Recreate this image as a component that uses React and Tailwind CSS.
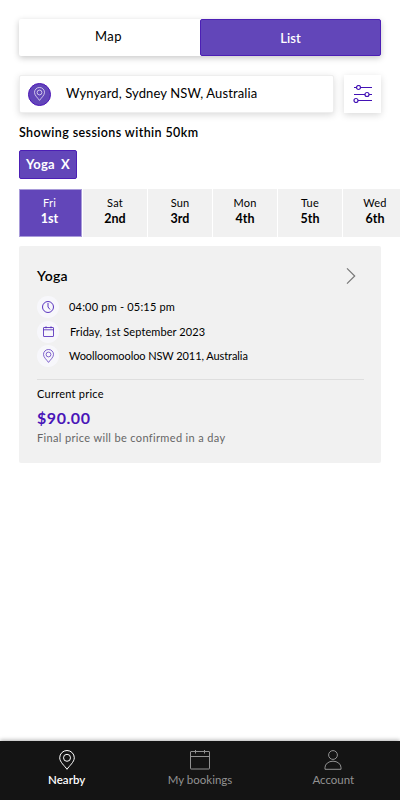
const days = [
  { day: "Fri", date: "1st" },
  { day: "Sat", date: "2nd" },
  { day: "Sun", date: "3rd" },
  { day: "Mon", date: "4th" },
  { day: "Tue", date: "5th" },
  { day: "Wed", date: "6th" },
];

const PinIcon = ({ className }) => (
  <svg viewBox="0 0 16 20" fill="none" stroke="currentColor" className={className}>
    <path d="M8 19.3C5.8 16 .7 12 .7 7.8a7.3 7.3 0 0 1 14.6 0C15.3 12 10.2 16 8 19.3Z" />
    <circle cx="8" cy="7.8" r="3.5" />
  </svg>
);

const CalendarIcon = ({ className }) => (
  <svg viewBox="0 0 20 20" fill="none" stroke="currentColor" className={className}>
    <rect x=".5" y="1.5" width="19" height="17.5" rx=".5" />
    <path d="M.5 6.5h19M5.5 0v3.5M14.5 0v3.5" />
  </svg>
);

const SmallCalendarIcon = ({ className }) => (
  <svg viewBox="0 0 11 11" fill="none" stroke="currentColor" strokeWidth=".8" className={className}>
    <rect x=".5" y="1.5" width="10" height="9" rx=".4" />
    <path d="M.5 3.8h10M3 .3v2M8 .3v2" />
  </svg>
);

const ClockIcon = ({ className }) => (
  <svg viewBox="0 0 12 12" fill="none" stroke="currentColor" strokeWidth=".9" className={className}>
    <circle cx="6" cy="6" r="5.5" />
    <path d="M6 2v4l2 2.5" />
  </svg>
);

const UserIcon = ({ className }) => (
  <svg viewBox="0 0 18 20" fill="none" stroke="currentColor" className={className}>
    <circle cx="9" cy="5" r="4.4" />
    <path d="M1 19.3v-1.8a8 6.300 0 0 1 16 0v1.8Z" />
  </svg>
);

const FilterIcon = ({ className }) => (
  <svg viewBox="0 0 20 18" fill="none" stroke="currentColor" strokeWidth="1.2" className={className}>
    <path d="M1 2.500h2.500M7.500 2.500H19M1 9.500h11M16 9.500h3M5 15.500h14" />
    <circle cx="5.5" cy="2.5" r="2" />
    <circle cx="14" cy="9.5" r="2" />
    <circle cx="3" cy="15.5" r="2" />
  </svg>
);

const details = [
  { icon: ClockIcon, size: "w-3 h-3", text: "04:00 pm - 05:15 pm", style: "pl-[10px] tracking-[0.2px]" },
  { icon: SmallCalendarIcon, size: "w-[11px] h-[11px]", text: "Friday, 1st September 2023", style: "pl-[11px] tracking-[0.08px]" },
  { icon: PinIcon, size: "w-[11px] h-[14px]", text: "Woolloomooloo NSW 2011, Australia", style: "pl-[10px] tracking-[-0.08px]" },
];

const tabs = [
  { label: "Nearby", icon: PinIcon, size: "w-4 h-5", active: true },
  { label: "My bookings", icon: CalendarIcon, size: "w-5 h-5" },
  { label: "Account", icon: UserIcon, size: "w-[18px] h-5" },
];

export default function App() {
  return (
    <div className="flex h-[800px] w-[400px] flex-col overflow-hidden bg-white font-['Lato',sans-serif] text-black">
      <main className="flex-1 pt-[19px] pl-[19px]">
        {/* Map / list switch */}
        <div className="mr-[19px] flex h-[37px] rounded-[2px] bg-white shadow-[0_2px_6px_rgba(0,0,0,0.22)]">
          <button className="w-[181px] pr-[2px] pb-px text-[13px] tracking-[0.5px]">Map</button>
          <button className="flex-1 rounded-[2px] border border-[#4c1fb5] bg-[#6246b9] pt-[2px] text-[13px] font-semibold text-white">List</button>
        </div>

        {/* Location search */}
        <div className="mt-[19px] mr-[19px] flex h-[38px] gap-[10px]">
          <div className="flex flex-1 items-center rounded-[2px] border border-[#eeeeee] bg-white pl-2 shadow-[0_2px_7px_rgba(0,0,0,0.15)]">
            <span className="flex h-[23px] w-[23px] items-center justify-center rounded-full border border-[#4c14b8] bg-[#6246b9] text-white">
              <PinIcon className="h-[14px] w-[11px]" />
            </span>
            <span className="pb-px pl-[15px] text-[13px] tracking-[0.12px]">Wynyard, Sydney NSW, Australia</span>
          </div>
          <button className="flex w-[37px] items-center justify-center bg-white text-[#4312b5] shadow-[0_2px_7px_rgba(0,0,0,0.15)]">
            <FilterIcon className="h-[18px] w-5" />
          </button>
        </div>

        <h1 className="mt-3 h-4 text-[12.5px] leading-4 font-semibold tracking-[0.4px]">Showing sessions within 50km</h1>

        <button className="mt-[9px] flex h-[29px] w-[58px] items-center justify-center gap-[6px] rounded-[2px] border border-[#4c1fb5] bg-[#6246b9] text-[13px] font-bold tracking-[0.3px] text-white">
          <span>Yoga</span>
          <span>X</span>
        </button>

        {/* Day picker */}
        <div className="mt-[10px] flex h-12 gap-px overflow-hidden">
          {days.map(({ day, date }, i) => (
            <button
              key={day}
              className={`flex h-12 shrink-0 flex-col items-center ${i === 0 ? "w-[63px] border border-[#a89bd9] bg-[#6246b9] pt-[5px] pr-[2px] text-white" : "w-16 bg-[#f1f1f1] pt-[6px]"}`}
            >
              <span className="h-4 text-[11px] leading-4 tracking-[0.2px]">{day}</span>
              <span className="h-4 text-[12.5px] leading-4 font-bold">{date}</span>
            </button>
          ))}
        </div>

        {/* Session card */}
        <article className="mt-[9px] mr-[19px] h-[217px] rounded-[2px] bg-[#f1f1f1] pr-[17px] pl-[18px]">
          <div className="flex h-[49px] items-end justify-between">
            <h2 className="pb-[10px] text-[14px] leading-[18px] font-semibold tracking-[0.3px]">Yoga</h2>
            <svg viewBox="0 0 10 18" fill="none" stroke="#777" strokeWidth="1.2" className="mr-2 mb-[10px] h-[18px] w-[10px]">
              <path d="m1 1.300 7.700 7.700L1 16.700" />
            </svg>
          </div>

          {details.map(({ icon: Icon, size, text, style }) => (
            <div key={text} className="flex h-[24.5px] items-center">
              <span className="flex h-[22px] w-[22px] items-center justify-center rounded-full bg-[#f7f7fb] text-[#4a20b8]">
                <Icon className={size} />
              </span>
              <span className={`text-[11px] leading-4 ${style}`}>{text}</span>
            </div>
          ))}

          <div className="mt-[10px] border-t border-[#dedede] pt-[6px]">
            <p className="h-4 text-[11px] leading-4 tracking-[0.25px]">Current price</p>
            <p className="mt-[6px] h-5 text-[16px] leading-5 font-bold tracking-[0.55px] text-[#4915b8]">$90.00</p>
            <p className="mt-[2px] h-4 text-[11px] leading-4 tracking-[0.35px] text-[#666]">Final price will be confirmed in a day</p>
          </div>
        </article>
      </main>

      {/* Bottom navigation */}
      <nav className="flex h-[59px] bg-[#141414] shadow-[0_-1px_4px_rgba(0,0,0,0.3)]">
        {tabs.map(({ label, icon: Icon, size, active }) => (
          <a key={label} className={`flex flex-1 flex-col items-center pt-[9px] ${active ? "font-semibold text-white" : "text-[#929292]"}`}>
            <Icon className={size} />
            <span className="pt-[2px] text-[11.5px] leading-4">{label}</span>
          </a>
        ))}
      </nav>
    </div>
  );
}
